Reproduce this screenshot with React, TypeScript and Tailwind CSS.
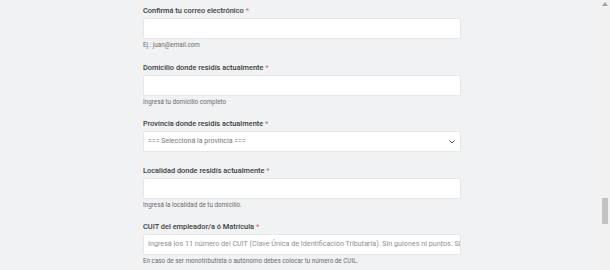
import React from "react";

const font = { fontFamily: "Roboto, 'Liberation Sans', sans-serif" };

function Label({ text }: { text: string }) {
  return (
    <div className="text-[7.4px] leading-[10px] font-medium text-[#3a3a3a]">
      {text} <span className="text-[#d07a7a]">*</span>
    </div>
  );
}

function Help({ text }: { text: string }) {
  return <div className="mt-[2px] text-[6.3px] leading-[9px] text-[#6a6a6a]">{text}</div>;
}

function Input({ placeholder }: { placeholder?: string }) {
  return (
    <div className="mt-[2px] h-[21px] bg-white border border-[#e6e6e6] rounded-[2px] flex items-center px-[4px] overflow-hidden whitespace-nowrap">
      <span className="text-[7.2px] text-[#8f8f8f]">{placeholder ?? ""}</span>
    </div>
  );
}

export default function App() {
  return (
    <div className="w-[610px] h-[270px] overflow-hidden bg-[#f1f2f4] flex" style={font}>
      <div className="flex-1 pl-[143px] pt-[6px]">
        <div className="w-[318px] flex flex-col">
          <div className="h-[57px]">
            <Label text="Confirmá tu correo electrónico" />
            <Input />
            <Help text="Ej.: juan@email.com" />
          </div>
          <div className="h-[56px]">
            <Label text="Domicilio donde residís actualmente" />
            <Input />
            <Help text="Ingresá tu domicilio completo" />
          </div>
          <div className="h-[47px]">
            <Label text="Provincia donde residís actualmente" />
            <div className="mt-[2px] h-[21px] bg-white border border-[#e6e6e6] rounded-[2px] flex items-center justify-between px-[4px]">
              <span className="text-[7px] text-[#777]">=== Seleccioná la provincia ===</span>
              <svg width="6" height="4" viewBox="0 0 6 4" className="mr-[1px]">
                <path d="M0.5 0.5 L3 3 L5.5 0.5" fill="none" stroke="#555" strokeWidth="1" />
              </svg>
            </div>
          </div>
          <div className="h-[56px]">
            <Label text="Localidad donde residís actualmente" />
            <Input />
            <Help text="Ingresá la localidad de tu domicilio." />
          </div>
          <div className="h-[56px]">
            <Label text="CUIT del empleador/a ó Matrícula" />
            <Input placeholder="Ingresá los 11 número del CUIT (Clave Única de Identificación Tributaria). Sin guiones ni puntos. Si" />
            <Help text="En caso de ser monotributista o autónomo debes colocar tu número de CUIL." />
          </div>
        </div>
      </div>
      <div className="w-[10px] h-full bg-[#f1f1f1] flex flex-col items-center">
        <svg width="6" height="4" viewBox="0 0 6 4" className="mt-[2px]">
          <path d="M0 4 L3 0 L6 4 Z" fill="#a3a3a3" />
        </svg>
        <div className="mt-[192px] w-[6px] h-[26px] bg-[#c1c1c1]" />
      </div>
    </div>
  );
}
